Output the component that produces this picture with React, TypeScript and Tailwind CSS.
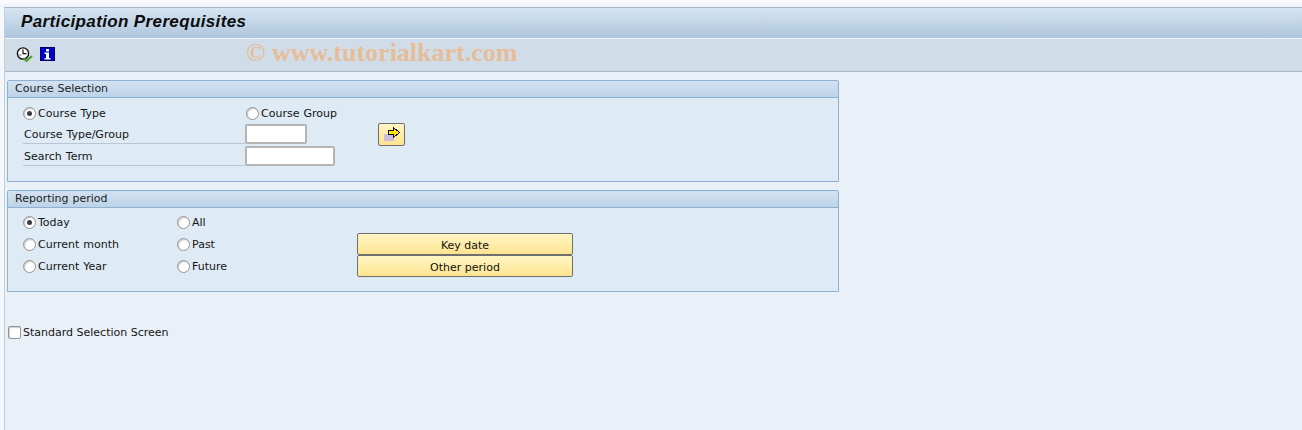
import React from "react";

const font = { fontFamily: '"DejaVu Sans", sans-serif', wordSpacing: "0.5px" };

function Radio({ checked = false }: { checked?: boolean }) {
  return (
    <span className="mb-[2px] flex h-[13px] w-[13px] shrink-0 items-center justify-center rounded-full border border-[#949494] bg-white shadow-[inset_1px_1px_1px_#c8c8c8]">
      {checked && <span className="h-[5px] w-[5px] rounded-full bg-[#3a3a4a]" />}
    </span>
  );
}

function RadioLabel({ label, checked, w }: { label: string; checked?: boolean; w: string }) {
  return (
    <div className={`flex items-center gap-[2px] ${w}`}>
      <Radio checked={checked} />
      <span className="whitespace-nowrap pt-[1px]">{label}</span>
    </div>
  );
}

function Panel({ title, children }: { title: string; children: React.ReactNode }) {
  return (
    <section className="ml-[6px] h-[102px] w-[832px] rounded-t-[2px] border border-[#8eb0d2] bg-[#deeaf4]">
      <h2 className="h-[17px] border-b border-[#8eb0d2] bg-gradient-to-b from-[#d3e2f1] to-[#bdd3e8] pl-[7px] text-[11px] leading-[15px] font-normal text-[#1c1c1c]">
        {title}
      </h2>
      {children}
    </section>
  );
}

function YellowButton({ label }: { label: string }) {
  return (
    <button className="-mt-[1px] flex h-[22px] w-[216px] items-center justify-center self-start rounded-[2px] border border-[#6f6f6f] bg-gradient-to-b from-[#fff6c4] to-[#fee48f] pt-[4px] text-[11px] text-[#111]">
      {label}
    </button>
  );
}

function ClockIcon() {
  return (
    <svg width="17" height="15" viewBox="0 0 17 15">
      <circle cx="7" cy="6.5" r="5.6" fill="#fff" stroke="#111" strokeWidth="1.4" />
      <path d="M7 2.5v4.2h3.5" fill="none" stroke="#111" strokeWidth="1.2" />
      <path d="M2.5 8h3" stroke="#777" strokeWidth="1" />
      <path d="M8 11.5l2.5 2.5 5.5-5" fill="none" stroke="#4c9a2a" strokeWidth="2" />
    </svg>
  );
}

function InfoIcon() {
  return (
    <svg width="15" height="14" viewBox="0 0 15 14">
      <rect width="15" height="14" fill="#0000c8" />
      <rect x="0.5" y="0.5" width="14" height="13" fill="none" stroke="#000060" />
      <rect x="6" y="2" width="3" height="2.5" fill="#fff" />
      <path d="M4.5 5.5h4.5v5.5h1.5V12.5h-6V11H6V7H4.5z" fill="#fff" />
    </svg>
  );
}

function ArrowIcon() {
  return (
    <svg width="16" height="16" viewBox="0 0 16 16" shapeRendering="crispEdges">
      <rect x="0" y="7" width="10" height="7" fill="#cdbfdc" />
      <path d="M4.5 3.5h5V0.5L15.5 5.5l-6 5V7.5h-5z" fill="#ffe600" stroke="#111" strokeWidth="1" />
    </svg>
  );
}

const inputClass = "h-[20px] rounded-[2px] border-2 border-[#b4b4b4] bg-white";

export default function App() {
  return (
    <div className="flex h-[430px] w-[1302px] flex-col overflow-hidden bg-[#f4f7fb] text-[11px] text-[#151515]" style={font}>
      <div className="h-[7px] shrink-0 bg-gradient-to-b from-[#fbfcfe] to-[#eef2f8]" />
      <div className="ml-[4px] flex min-h-0 flex-1 flex-col border-l border-[#c4cedb] bg-[#e9f0f8]">
        <div className="flex h-[31px] shrink-0 items-center border-t border-[#a9b6c6] bg-gradient-to-b from-[#d6e4f2] to-[#aec6dd] pb-[3px] pl-[16px]">
          <h1 className="font-bold italic leading-none text-[#0c0c0c]" style={{ fontFamily: '"Liberation Sans", sans-serif', letterSpacing: "0.37px", fontSize: 17, wordSpacing: 0 }}>
            Participation Prerequisites
          </h1>
        </div>
        <div className="flex h-[34px] shrink-0 items-center border-t border-b border-t-[#eef4fa] border-b-[#aab8c8] bg-[#d0dde8] pb-[2px] pl-[11px]">
          <ClockIcon />
          <span className="ml-[7px] flex"><InfoIcon /></span>
          <span className="mb-[3px] ml-[191px] whitespace-nowrap text-[26px] font-bold leading-none text-[#e6bd98]" style={{ fontFamily: '"Liberation Serif", serif', wordSpacing: 0 }}>
            © www.tutorialkart.com
          </span>
        </div>

        <div className="mt-[8px] -ml-[4px]">
          <Panel title="Course Selection">
            <div className="pl-[15px] pt-[8px]">
              <div className="flex h-[16px] items-center">
                <RadioLabel label="Course Type" checked w="w-[223px]" />
                <RadioLabel label="Course Group" w="w-[120px]" />
              </div>
              <div className="flex h-[22px] items-end">
                <div className="flex h-[22px] w-[222px] items-center border-b border-[#b9c6d2] pl-[1px] pt-[5px]">Course Type/Group</div>
                <div className={`${inputClass} w-[62px]`} />
                <button className="ml-[71px] mt-[1px] flex h-[23px] w-[27px] items-center justify-center self-start rounded-[2px] border border-[#6f6f6f] bg-gradient-to-b from-[#fff6c4] to-[#fee48f]">
                  <ArrowIcon />
                </button>
              </div>
              <div className="flex h-[22px] items-end">
                <div className="flex h-[22px] w-[222px] items-center border-b border-[#b9c6d2] pl-[1px] pt-[5px]">Search Term</div>
                <div className={`${inputClass} w-[90px]`} />
              </div>
            </div>
          </Panel>
        </div>

        <div className="mt-[8px] -ml-[4px]">
          <Panel title="Reporting period">
            <div className="pl-[15px] pt-[4px]">
              <div className="flex h-[22px] items-center">
                <RadioLabel label="Today" checked w="w-[154px]" />
                <RadioLabel label="All" w="w-[180px]" />
              </div>
              <div className="flex h-[22px] items-center">
                <RadioLabel label="Current month" w="w-[154px]" />
                <RadioLabel label="Past" w="w-[180px]" />
                <YellowButton label="Key date" />
              </div>
              <div className="flex h-[22px] items-center">
                <RadioLabel label="Current Year" w="w-[154px]" />
                <RadioLabel label="Future" w="w-[180px]" />
                <YellowButton label="Other period" />
              </div>
            </div>
          </Panel>
        </div>

        <div className="mt-[32px] -ml-[4px] flex items-center gap-[2px] pl-[7px]">
          <span className="h-[13px] w-[13px] rounded-[2px] border border-[#949494] bg-white shadow-[inset_1px_1px_1px_#d0d0d0]" />
          <span className="pt-[1px]" style={{ wordSpacing: 0 }}>Standard Selection Screen</span>
        </div>
      </div>
    </div>
  );
}
